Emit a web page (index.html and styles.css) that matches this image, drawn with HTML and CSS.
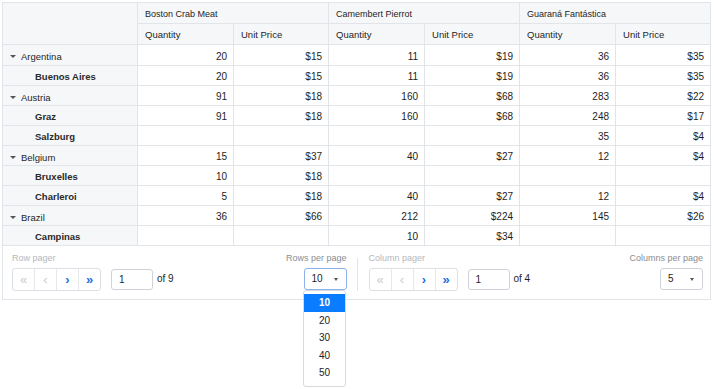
FILE: index.html
```html
<!DOCTYPE html>
<html>
  <head>
    <meta charset="utf-8">
    <title>Pivot Grid</title>
    <link rel="stylesheet" href="styles.css">
  </head>
  <body>
    <div class="wrap">
      <table class="grid">
        <colgroup>
          <col class="c-head">
          <col class="c-q"><col class="c-p">
          <col class="c-q"><col class="c-p">
          <col class="c-q"><col class="c-p">
        </colgroup>
        <thead>
          <tr class="h1">
            <th class="corner" rowspan="2"></th>
            <th colspan="2">Boston Crab Meat</th>
            <th colspan="2">Camembert Pierrot</th>
            <th colspan="2">Guaraná Fantástica</th>
          </tr>
          <tr class="h2">
            <th>Quantity</th><th>Unit Price</th>
            <th>Quantity</th><th>Unit Price</th>
            <th>Quantity</th><th>Unit Price</th>
          </tr>
        </thead>
        <tbody>
          <tr class="group first">
            <th><span class="caret"></span>Argentina</th>
            <td>20</td><td>$15</td><td>11</td><td>$19</td><td>36</td><td>$35</td>
          </tr>
          <tr class="child">
            <th>Buenos Aires</th>
            <td>20</td><td>$15</td><td>11</td><td>$19</td><td>36</td><td>$35</td>
          </tr>
          <tr class="group">
            <th><span class="caret"></span>Austria</th>
            <td>91</td><td>$18</td><td>160</td><td>$68</td><td>283</td><td>$22</td>
          </tr>
          <tr class="child">
            <th>Graz</th>
            <td>91</td><td>$18</td><td>160</td><td>$68</td><td>248</td><td>$17</td>
          </tr>
          <tr class="child">
            <th>Salzburg</th>
            <td></td><td></td><td></td><td></td><td>35</td><td>$4</td>
          </tr>
          <tr class="group">
            <th><span class="caret"></span>Belgium</th>
            <td>15</td><td>$37</td><td>40</td><td>$27</td><td>12</td><td>$4</td>
          </tr>
          <tr class="child">
            <th>Bruxelles</th>
            <td>10</td><td>$18</td><td></td><td></td><td></td><td></td>
          </tr>
          <tr class="child">
            <th>Charleroi</th>
            <td>5</td><td>$18</td><td>40</td><td>$27</td><td>12</td><td>$4</td>
          </tr>
          <tr class="group">
            <th><span class="caret"></span>Brazil</th>
            <td>36</td><td>$66</td><td>212</td><td>$224</td><td>145</td><td>$26</td>
          </tr>
          <tr class="child">
            <th>Campinas</th>
            <td></td><td></td><td>10</td><td>$34</td><td></td><td></td>
          </tr>
        </tbody>
      </table>

      <div class="pager">
        <div class="section">
          <div class="side">
            <div class="label">Row pager</div>
            <div class="controls">
              <div class="btns">
                <span class="btn off">&laquo;</span>
                <span class="btn off">&lsaquo;</span>
                <span class="btn">&rsaquo;</span>
                <span class="btn">&raquo;</span>
              </div>
              <div class="input">1</div>
              <span class="of">of 9</span>
            </div>
          </div>
          <div class="side right">
            <div class="label">Rows per page</div>
            <div class="select focus">10<span class="arrow"></span></div>
          </div>
        </div>
        <div class="sep"></div>
        <div class="section">
          <div class="side">
            <div class="label">Column pager</div>
            <div class="controls">
              <div class="btns">
                <span class="btn off">&laquo;</span>
                <span class="btn off">&lsaquo;</span>
                <span class="btn">&rsaquo;</span>
                <span class="btn">&raquo;</span>
              </div>
              <div class="input">1</div>
              <span class="of">of 4</span>
            </div>
          </div>
          <div class="side right">
            <div class="label">Columns per page</div>
            <div class="select">5<span class="arrow"></span></div>
          </div>
        </div>
      </div>

      <ul class="menu">
        <li class="sel">10</li>
        <li>20</li>
        <li>30</li>
        <li>40</li>
        <li>50</li>
      </ul>
    </div>
  </body>
</html>
```

FILE: styles.css
```css
html, body {
    height: 100% ;
}
body {
    margin: 0 ;
    background: #fff ;
    font-family: "Liberation Sans", Arial, sans-serif ;
    font-size: 9.5px ;
    color: #1e1e1e ;
}
.wrap {
    position: relative ;
    padding: 2px 0 0 2px ;
    width: 709px ;
    min-height: 385px ;
}
.grid {
    width: 709px ;
    table-layout: fixed ;
    border-collapse: collapse ;
}
.c-head { width: 135px ; }
.c-q { width: 96px ; }
.c-p { width: 95px ; }
.grid th, .grid td {
    border: 1px solid #e1e4e9 ;
    padding: 0 6px ;
    height: 20px ;
    box-sizing: border-box ;
    white-space: nowrap ;
    overflow: hidden ;
}
.grid thead th {
    background: #f6f7f9 ;
    font-weight: normal ;
    text-align: left ;
    height: 21px ;
    padding-left: 7px ;
    padding-top: 1px ;
    color: #1e1e1e ;
}
.grid .h1 th {
    font-size: 9px ;
    padding-top: 2px ;
}
.grid tbody th {
    background: #f6f7f9 ;
    text-align: left ;
    font-weight: normal ;
}
.grid td {
    text-align: right ;
    font-size: 10px ;
    padding-top: 1px ;
}
.grid .first th, .grid .first td {
    height: 21px ;
}
.grid .group th {
    padding-left: 7px ;
    padding-top: 3px ;
}
.grid .group td {
    padding-top: 2px ;
}
.grid .child th {
    padding-left: 32px ;
    padding-top: 1px ;
    font-weight: bold ;
    color: #2a2a2a ;
}
.caret {
    display: inline-block ;
    width: 0 ;
    height: 0 ;
    border-left: 3px solid transparent ;
    border-right: 3px solid transparent ;
    border-top: 3px solid #555 ;
    margin-right: 5px ;
    vertical-align: 2px ;
}
.pager {
    display: flex ;
    align-items: stretch ;
    border: 1px solid #e1e4e9 ;
    border-top: none ;
    height: 53px ;
    padding: 0 7px 0 9px ;
}
.section {
    flex: 1 ;
    display: flex ;
    justify-content: space-between ;
}
.sep {
    width: 1px ;
    background: #e1e4e9 ;
    margin: 12px 11px 8px 10px ;
}
.side {
    display: flex ;
    flex-direction: column ;
    padding-top: 7px ;
}
.side.right {
    align-items: flex-end ;
}
.label {
    color: #b5b8bd ;
    font-size: 9px ;
    height: 15px ;
}
.side.right .label {
    color: #8a8d92 ;
}
.controls {
    display: flex ;
    align-items: center ;
}
.btns {
    display: flex ;
    border: 1px solid #dcdfe4 ;
    border-radius: 3px ;
    height: 21px ;
}
.btn {
    width: 21px ;
    display: flex ;
    align-items: center ;
    justify-content: center ;
    color: #1a6fe6 ;
    font-size: 13px ;
    font-weight: bold ;
    border-left: 1px solid #e6e8ec ;
}
.btn:first-child {
    border-left: none ;
}
.btn.off {
    color: #c8cbd0 ;
    font-weight: normal ;
}
.input {
    margin-left: 10px ;
    height: 19px ;
    border: 1px solid #cfd3d9 ;
    border-radius: 3px ;
    padding-left: 7px ;
    width: 33px ;
    line-height: 19px ;
    font-size: 10px ;
}
.of {
    margin-left: 4px ;
    margin-top: -2px ;
    font-size: 10px ;
}
.select {
    position: relative ;
    width: 34px ;
    height: 20px ;
    line-height: 20px ;
    padding-left: 7px ;
    border: 1px solid #cfd3d9 ;
    border-radius: 3px ;
    font-size: 10px ;
}
.select.focus {
    border-color: #8db1ea ;
}
.arrow {
    position: absolute ;
    right: 8px ;
    top: 9px ;
    width: 0 ;
    height: 0 ;
    border-left: 2.5px solid transparent ;
    border-right: 2.5px solid transparent ;
    border-top: 3px solid #555 ;
}
.menu {
    position: absolute ;
    left: 303px ;
    top: 290px ;
    width: 41px ;
    margin: 0 ;
    padding: 3px 0 4px 0 ;
    list-style: none ;
    border: 1px solid #d6d9de ;
    border-radius: 3px ;
    background: #fff ;
    z-index: 5 ;
}
.menu li {
    height: 17.5px ;
    line-height: 17.5px ;
    text-align: center ;
    color: #222 ;
    font-size: 10px ;
}
.menu li.sel {
    background: #0a7cff ;
    color: #fff ;
    font-weight: bold ;
}
```
